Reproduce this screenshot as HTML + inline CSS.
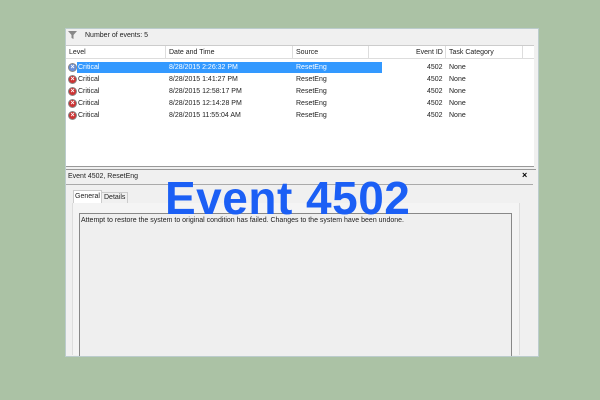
<!DOCTYPE html>
<html><head><style>
body{margin:0;width:600px;height:400px;background:#abc2a5;position:relative;overflow:hidden;font-family:"Liberation Sans",sans-serif;}
.a{position:absolute;}
.t{font-size:7px;color:#222;white-space:nowrap;}
</style></head><body>
<div class="a" style="left:65px;top:28px;width:472px;height:327px;background:#f0f0f0;border:1px solid #bcc;"></div>
<div class="a" style="left:66px;top:29px;width:470px;height:15px;background:#f0f0f0;"></div>
<svg class="a" style="left:68px;top:31px" width="9" height="8"><path d="M0 0H9L5.5 4V8L3.5 7V4Z" fill="#888"/></svg>
<div class="a t" style="left:85px;top:32px">Number of events: 5</div>
<div class="a" style="left:66px;top:45px;width:468px;height:120px;background:#fff;border-top:1px solid #ccc;border-bottom:1px solid #999;"></div>
<div class="a" style="left:66px;top:46px;width:468px;height:12px;border-bottom:1px solid #ddd;"></div>
<div class="a" style="left:165px;top:46px;width:1px;height:12px;background:#ddd"></div>
<div class="a" style="left:292px;top:46px;width:1px;height:12px;background:#ddd"></div>
<div class="a" style="left:368px;top:46px;width:1px;height:12px;background:#ddd"></div>
<div class="a" style="left:445px;top:46px;width:1px;height:12px;background:#ddd"></div>
<div class="a" style="left:522px;top:46px;width:1px;height:12px;background:#ddd"></div>
<div class="a t" style="left:69px;top:49px">Level</div>
<div class="a t" style="left:169px;top:49px">Date and Time</div>
<div class="a t" style="left:296px;top:49px">Source</div>
<div class="a t" style="left:416px;top:49px">Event ID</div>
<div class="a t" style="left:449px;top:49px">Task Category</div>
<div class="a" style="left:77px;top:62px;width:305px;height:11px;background:#3399ff"></div>
<div id="rows"></div>
<script>
var d=["8/28/2015 2:26:32 PM","8/28/2015 1:41:27 PM","8/28/2015 12:58:17 PM","8/28/2015 12:14:28 PM","8/28/2015 11:55:04 AM"],h="";
for(var i=0;i<5;i++){var y=63+i*12,c=i?"#222":"#fff";
h+='<div class="a" style="left:68px;top:'+y+'px;width:9px;height:9px;border-radius:50%;background:'+(i?'#c33':'#6a8fd8')+';border:0.5px solid #888;box-sizing:border-box;color:#fff;font-size:7px;line-height:8px;text-align:center;font-weight:bold">×</div>';
h+='<div class="a t" style="left:78px;top:'+(y+1)+'px;color:'+c+'">Critical</div>';
h+='<div class="a t" style="left:169px;top:'+(y+1)+'px;color:'+c+'">'+d[i]+'</div>';
h+='<div class="a t" style="left:296px;top:'+(y+1)+'px;color:'+c+'">ResetEng</div>';
h+='<div class="a t" style="left:427px;top:'+(y+1)+'px">4502</div>';
h+='<div class="a t" style="left:449px;top:'+(y+1)+'px">None</div>';}
document.getElementById('rows').innerHTML=h;
</script>
<div class="a" style="left:66px;top:169px;width:470px;height:1px;background:#999"></div>
<div class="a t" style="left:68px;top:173px">Event 4502, ResetEng</div>
<div class="a" style="left:522px;top:170px;font-size:9px;font-weight:bold">×</div>
<div class="a" style="left:66px;top:184px;width:467px;height:1px;background:#aaa"></div>
<div class="a" style="left:73px;top:190px;width:27px;height:14px;background:#fff;border:1px solid #ccc;border-bottom:none"></div>
<div class="a t" style="left:75px;top:193px">General</div>
<div class="a" style="left:101px;top:192px;width:25px;height:11px;border:1px solid #ccc;border-bottom:none"></div>
<div class="a t" style="left:104px;top:194px">Details</div>
<div class="a" style="left:72px;top:203px;width:446px;height:152px;background:#f4f4f4;border-left:1px solid #ddd;border-right:1px solid #ddd"></div>
<div class="a" style="left:79px;top:213px;width:431px;height:142px;background:#efefef;border:1px solid #888;border-bottom:none"></div>
<div class="a t" style="left:81px;top:217px">Attempt to restore the system to original condition has failed. Changes to the system have been undone.</div>
<div class="a" style="left:165px;top:175px;font-size:46px;font-weight:bold;color:#1b5ff5;line-height:46px;white-space:nowrap;letter-spacing:0.5px">Event 4502</div>
</body></html>
